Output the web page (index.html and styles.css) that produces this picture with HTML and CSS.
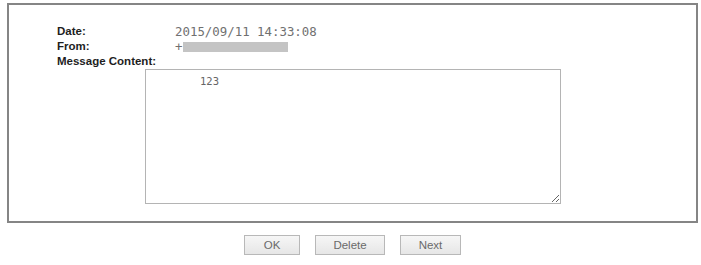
FILE: index.html
```html
<!DOCTYPE html>
<html>
<head>
<meta charset="utf-8">
<link rel="stylesheet" href="styles.css">
</head>
<body>
<div class="frame">
  <div class="rows">
    <div class="row"><span class="label">Date:</span><span class="value">2015/09/11 14:33:08</span></div>
    <div class="row"><span class="label">From:</span><span class="value">+<span class="masked"></span></span></div>
    <div class="row"><span class="label">Message Content:</span></div>
  </div>
  <textarea class="content" readonly>123</textarea>
</div>
<div class="actions">
  <button class="btn btn-ok">OK</button>
  <button class="btn btn-delete">Delete</button>
  <button class="btn btn-next">Next</button>
</div>
</body>
</html>
```
FILE: styles.css
```css
html, body {
  margin: 0;
  padding: 0;
  background: #ffffff;
}
body {
  font-family: "Liberation Sans", Arial, sans-serif;
  width: 701px;
  height: 265px;
  overflow: hidden;
}
.frame {
  box-sizing: border-box;
  margin: 3px 0 0 7px;
  width: 691px;
  height: 220px;
  border: 2px solid #858585;
  padding: 19px 0 0 48px;
  display: flex;
  flex-direction: column;
}
.rows {
  display: flex;
  flex-direction: column;
}
.row {
  display: flex;
  height: 15px;
  line-height: 15px;
  align-items: center;
}
.label {
  width: 118px;
  font-weight: bold;
  font-size: 11.5px;
  color: #1e1e1e;
  white-space: nowrap;
}
.value {
  font-family: "DejaVu Sans Mono", monospace;
  font-size: 12.4px;
  color: #707070;
  display: flex;
  align-items: center;
}
.masked {
  display: inline-block;
  width: 105px;
  height: 10px;
  background: #c4c4c4;
  margin-left: 1px;
}
.content {
  box-sizing: border-box;
  margin: 0 0 0 88px;
  width: 416px;
  height: 135px;
  border: 1px solid #b4b4b4;
  padding: 5px 4px 4px 54px;
  font-family: "DejaVu Sans Mono", monospace;
  font-size: 10.5px;
  color: #666;
  resize: both;
  outline: none;
}
.actions {
  display: flex;
  justify-content: center;
  gap: 15px;
  margin: 12px 0 0 0;
  padding-left: 4px;
}
.btn {
  box-sizing: border-box;
  height: 20px;
  border: 1px solid #b8b8b8;
  background: linear-gradient(#f6f6f6, #e6e6e6);
  font-family: "Liberation Sans", Arial, sans-serif;
  font-size: 11.5px;
  color: #6a6a6a;
  padding: 0;
}
.btn-ok { width: 56px; }
.btn-delete { width: 70px; }
.btn-next { width: 61px; }
```
